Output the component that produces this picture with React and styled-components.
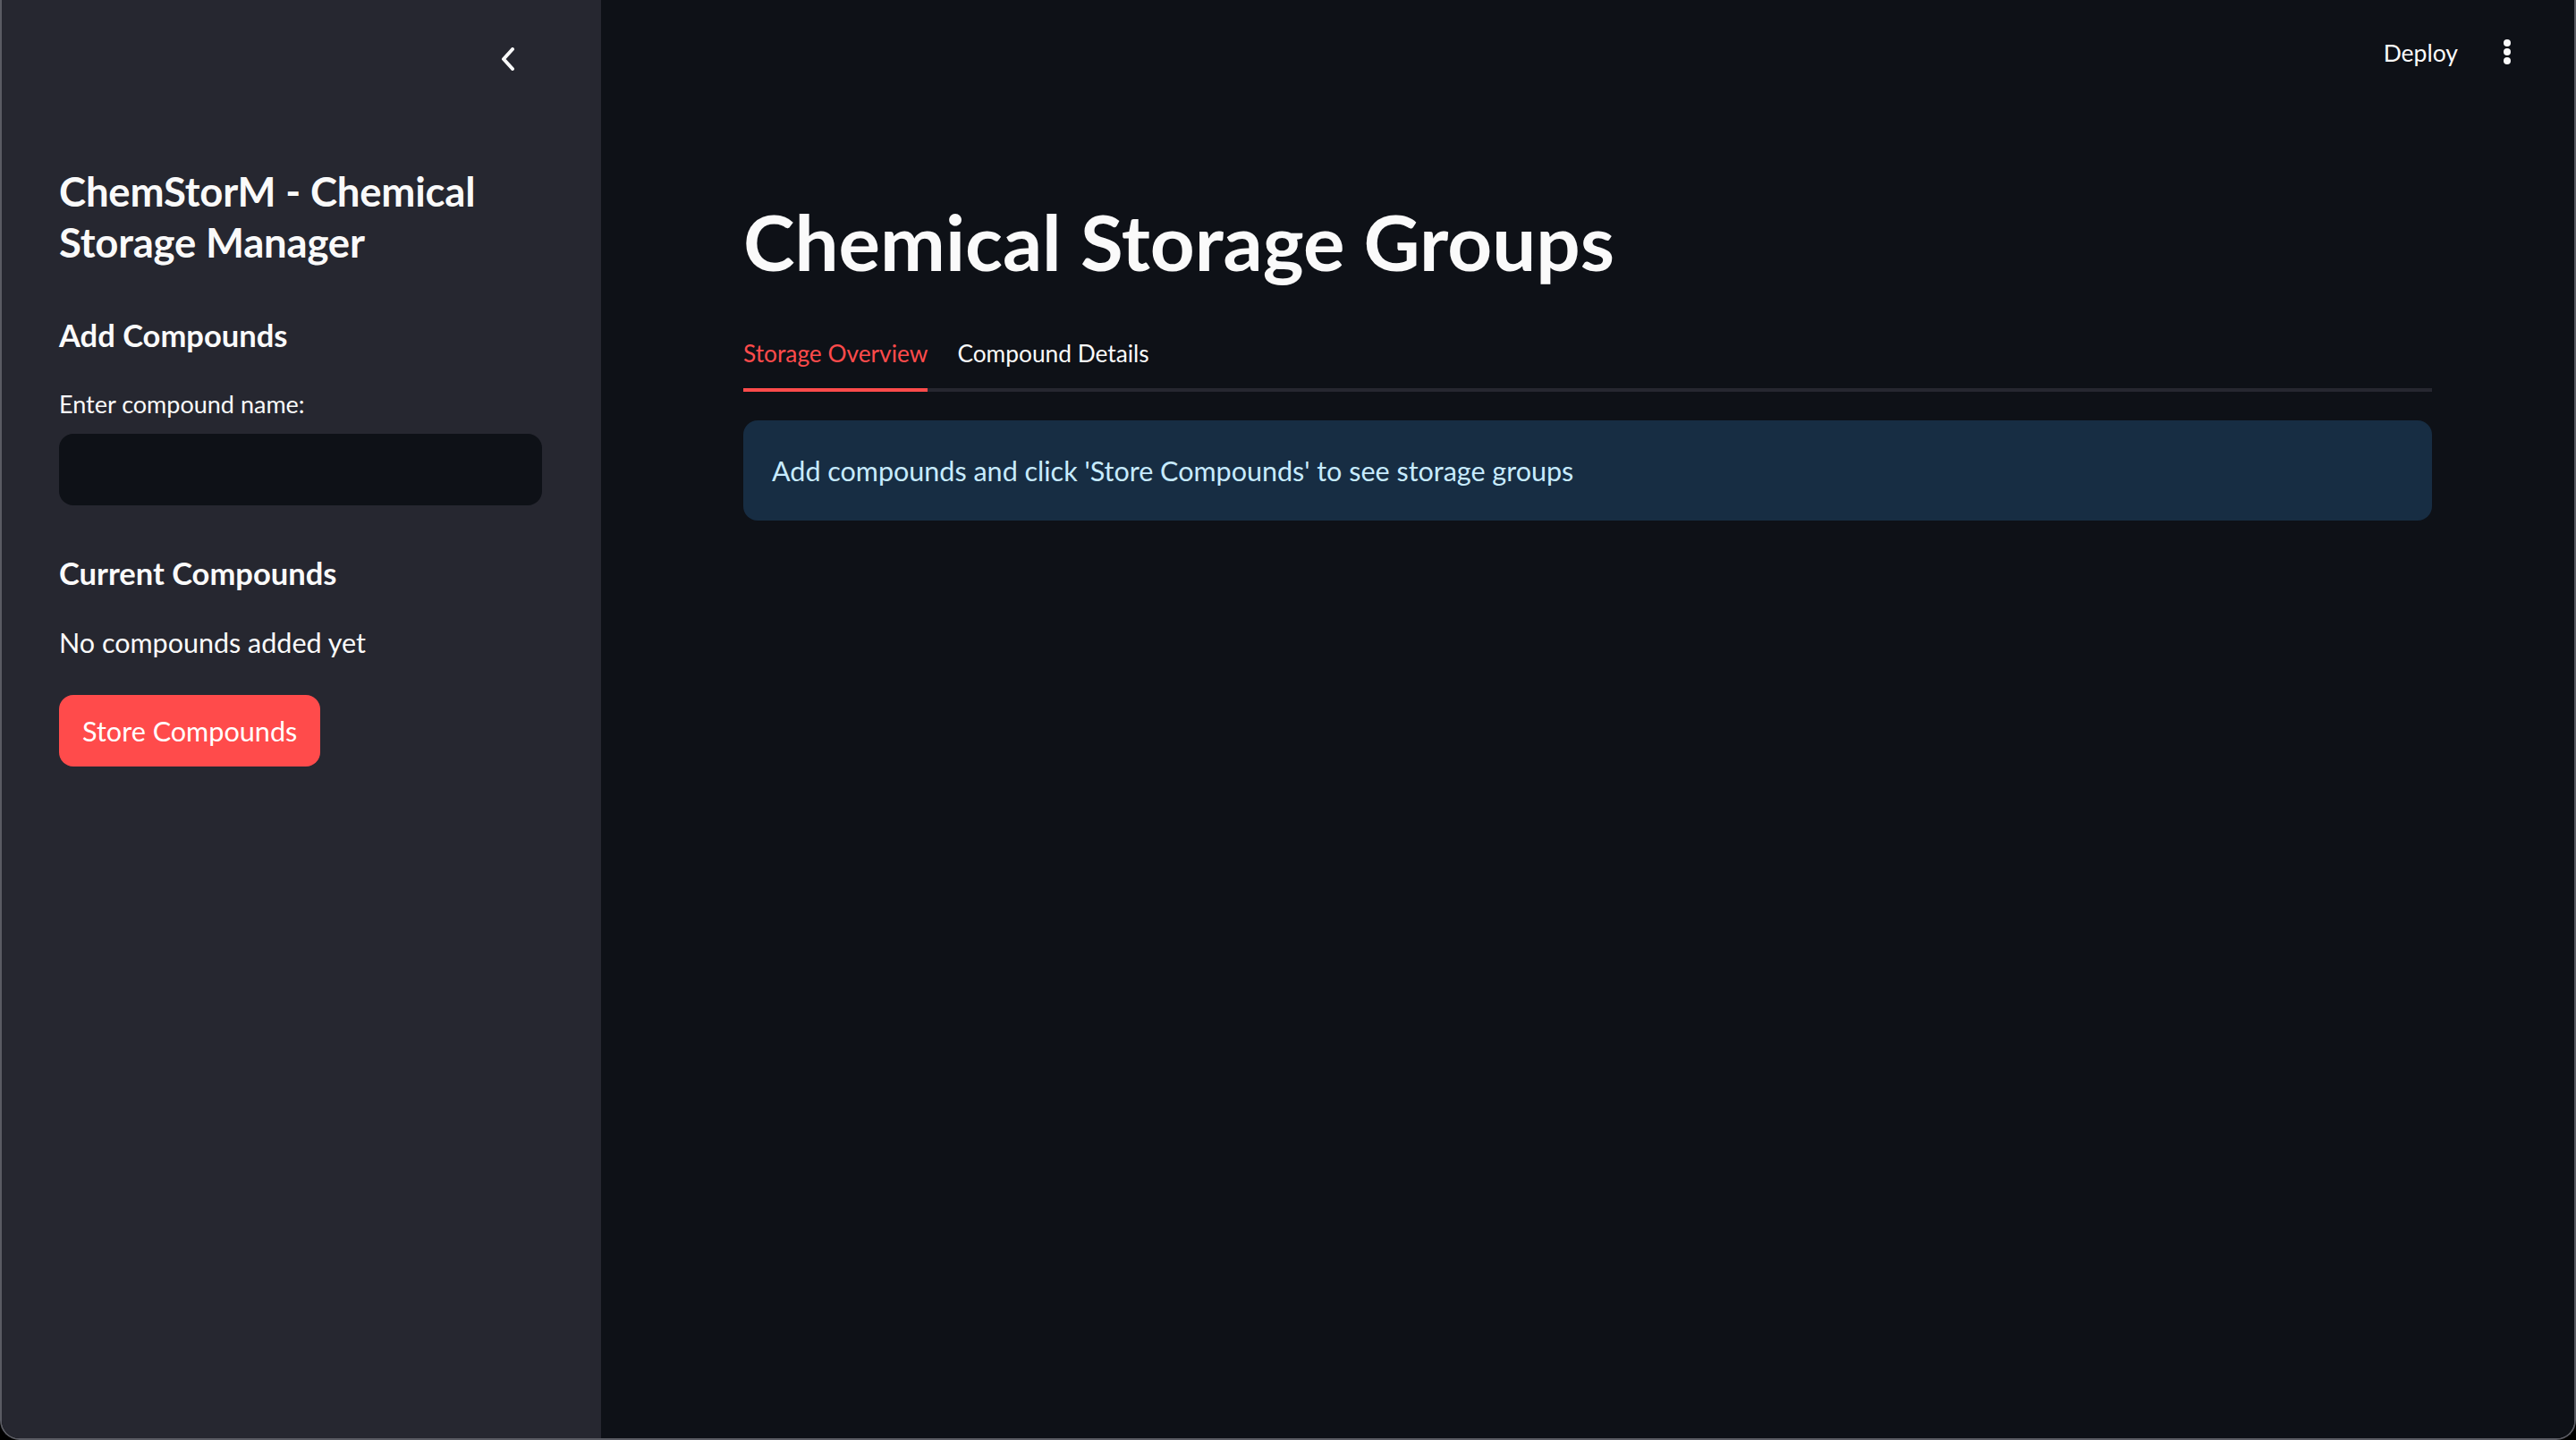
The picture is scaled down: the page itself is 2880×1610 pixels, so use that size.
import React from 'react';
import styled, { createGlobalStyle } from 'styled-components';

const GlobalStyle = createGlobalStyle`
  html, body {
    margin: 0;
    padding: 0;
    background: #000;
  }
  * {
    box-sizing: border-box;
  }
`;

const Frame = styled.div`
  display: flex;
  width: 2880px;
  height: 1610px;
  overflow: hidden;
  border: 2px solid #5a5b63;
  border-top: none;
  border-radius: 0 0 22px 22px;
  font-family: Lato, "Liberation Sans", sans-serif;
  color: #fafafa;
`;

const Sidebar = styled.aside`
  width: 670px;
  flex-shrink: 0;
  display: flex;
  flex-direction: column;
  background: #262730;
  padding: 0 66px 0 64px;
`;

const CollapseRow = styled.div`
  height: 132px;
  display: flex;
  align-items: center;
  justify-content: flex-end;
  padding-right: 28px;
`;

const IconButton = styled.button`
  background: none;
  border: none;
  padding: 0;
  display: flex;
  align-items: center;
  cursor: pointer;
  color: #fafafa;
`;

const SideTitle = styled.h1`
  margin: 53px 0 0;
  font-size: 45.5px;
  line-height: 57px;
  font-weight: 700;
  letter-spacing: -0.2px;
`;

const SideHeading = styled.h2`
  margin: ${(p) => p.$gap}px 0 0;
  font-size: 34.5px;
  line-height: 48px;
  font-weight: 700;
`;

const Label = styled.label`
  display: block;
  margin-top: 35px;
  font-size: 27px;
  line-height: 36px;
`;

const TextInput = styled.input`
  display: block;
  width: 100%;
  height: 80px;
  margin-top: 15px;
  border: none;
  border-radius: 16px;
  background: #0e1117;
  color: #fafafa;
  font: inherit;
  font-size: 30px;
  padding: 0 24px;
  outline: none;
`;

const BodyText = styled.p`
  margin: 29px 0 0;
  font-size: 30.5px;
  line-height: 48px;
`;

const PrimaryButton = styled.button`
  align-self: flex-start;
  height: 80px;
  margin-top: 35px;
  padding: 0 26px;
  border: none;
  border-radius: 16px;
  background: #ff4b4b;
  color: #fff;
  font: inherit;
  font-size: 30.6px;
  cursor: pointer;
`;

const Main = styled.main`
  flex: 1;
  display: flex;
  flex-direction: column;
  background: #0e1117;
`;

const Toolbar = styled.header`
  height: 118px;
  display: flex;
  align-items: center;
  justify-content: flex-end;
  gap: 49px;
  padding-right: 69px;
`;

const DeployLink = styled.span`
  font-size: 26.5px;
  color: #fafafa;
`;

const Content = styled.section`
  width: 1888px;
  margin: 0 auto;
`;

const PageTitle = styled.h1`
  margin: 99px 0 0;
  font-size: 87px;
  line-height: 106px;
  font-weight: 700;
`;

const TabList = styled.div`
  display: flex;
  gap: 33px;
  margin-top: 54px;
  border-bottom: 4px solid #262730;
`;

const Tab = styled.div`
  font-size: 26.3px;
  line-height: 36px;
  padding-bottom: 21px;
  margin-bottom: -4px;
  color: ${(p) => (p.$active ? '#ff4b4b' : '#fafafa')};
  border-bottom: 4px solid ${(p) => (p.$active ? '#ff4b4b' : 'transparent')};
`;

const InfoBox = styled.div`
  margin-top: 32px;
  height: 112px;
  display: flex;
  align-items: center;
  padding: 0 32px;
  border-radius: 16px;
  background: #172d43;
  color: #c7ebff;
  font-size: 30.5px;
`;

const ChevronLeft = () => (
  <svg width="18" height="26" viewBox="0 0 18 26">
    <polyline points="13,2 3,13 13,24" fill="none" stroke="currentColor" strokeWidth="4" strokeLinecap="round" strokeLinejoin="round" />
  </svg>
);

const Kebab = () => (
  <svg width="12" height="34" viewBox="0 0 12 34">
    <circle cx="6" cy="6" r="4" fill="#fafafa" />
    <circle cx="6" cy="16" r="4" fill="#fafafa" />
    <circle cx="6" cy="26" r="4" fill="#fafafa" />
  </svg>
);

export default function App() {
  return (
    <>
      <GlobalStyle />
      <Frame>
        <Sidebar>
          <CollapseRow>
            <IconButton aria-label="Collapse sidebar">
              <ChevronLeft />
            </IconButton>
          </CollapseRow>
          <SideTitle>ChemStorM - Chemical Storage Manager</SideTitle>
          <SideHeading $gap={52}>Add Compounds</SideHeading>
          <Label htmlFor="compound">Enter compound name:</Label>
          <TextInput id="compound" type="text" />
          <SideHeading $gap={52}>Current Compounds</SideHeading>
          <BodyText>No compounds added yet</BodyText>
          <PrimaryButton>Store Compounds</PrimaryButton>
        </Sidebar>
        <Main>
          <Toolbar>
            <DeployLink>Deploy</DeployLink>
            <IconButton aria-label="Main menu">
              <Kebab />
            </IconButton>
          </Toolbar>
          <Content>
            <PageTitle>Chemical Storage Groups</PageTitle>
            <TabList>
              <Tab $active>Storage Overview</Tab>
              <Tab>Compound Details</Tab>
            </TabList>
            <InfoBox>Add compounds and click 'Store Compounds' to see storage groups</InfoBox>
          </Content>
        </Main>
      </Frame>
    </>
  );
}
